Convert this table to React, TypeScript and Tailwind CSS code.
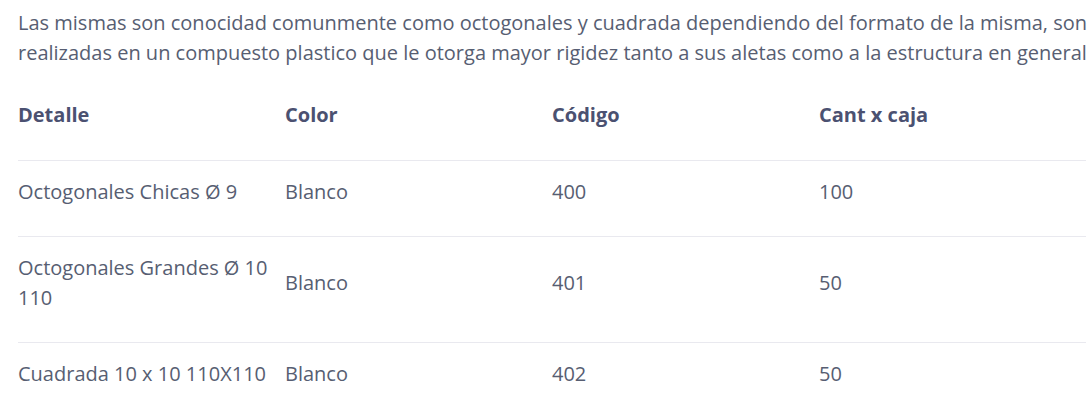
import React from 'react';

const rows = [
  { detalle: 'Octogonales Chicas Ø 9', color: 'Blanco', codigo: '400', cant: '100' },
  { detalle: 'Octogonales Grandes Ø 10 110', color: 'Blanco', codigo: '401', cant: '50' },
  { detalle: 'Cuadrada 10 x 10 110X110', color: 'Blanco', codigo: '402', cant: '50' },
];

const App: React.FC = () => {
  return (
    <div className="w-[1092px] h-[414px] overflow-hidden bg-white pl-[18px] pt-2 text-[20px] leading-[30px] text-[#575e72] font-['Open_Sans',sans-serif]">
      <p className="mb-4 whitespace-nowrap">
        Las mismas son conocidad comunmente como octogonales y cuadrada dependiendo del formato de la misma, son
        <br />
        realizadas en un compuesto plastico que le otorga mayor rigidez tanto a sus aletas como a la estructura en general
      </p>

      <table className="w-[1068px] table-fixed border-collapse">
        <thead>
          <tr className="border-b border-[#e9e9ef]">
            <th className="text-left font-bold text-[#4b5171] pt-4 pb-[30px] pr-3">Detalle</th>
            <th className="text-left font-bold text-[#4b5171] pt-4 pb-[30px] pr-3">Color</th>
            <th className="text-left font-bold text-[#4b5171] pt-4 pb-[30px] pr-3">Código</th>
            <th className="text-left font-bold text-[#4b5171] pt-4 pb-[30px] pr-3">Cant x caja</th>
          </tr>
        </thead>
        <tbody>
          {rows.map(r => (
            <tr key={r.codigo} className="border-b border-[#e9e9ef]">
              <td className="align-middle pt-4 pb-[29px] pr-3">{r.detalle}</td>
              <td className="align-middle pt-4 pb-[29px] pr-3">{r.color}</td>
              <td className="align-middle pt-4 pb-[29px] pr-3">{r.codigo}</td>
              <td className="align-middle pt-4 pb-[29px] pr-3">{r.cant}</td>
            </tr>
          ))}
        </tbody>
      </table>
    </div>
  );
};

export default App;
